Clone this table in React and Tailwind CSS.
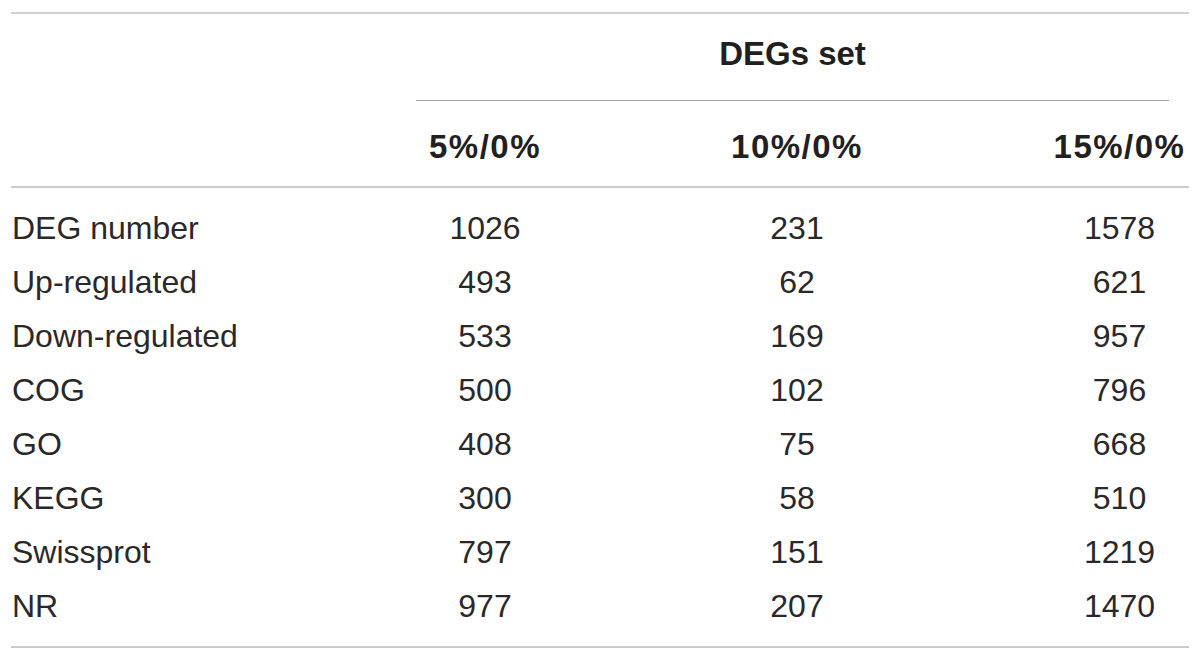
const rows = [
  ['DEG number', '1026', '231', '1578'],
  ['Up-regulated', '493', '62', '621'],
  ['Down-regulated', '533', '169', '957'],
  ['COG', '500', '102', '796'],
  ['GO', '408', '75', '668'],
  ['KEGG', '300', '58', '510'],
  ['Swissprot', '797', '151', '1219'],
  ['NR', '977', '207', '1470'],
]

const cols = 'grid grid-cols-[318px_312px_312px_233px]'

export default function App() {
  return (
    <div className="w-[1200px] h-[661px] bg-white px-[11px] pt-[12px] text-[#231f20] font-['Liberation_Sans',Arial,sans-serif]">
      <div className="border-t-2 border-[#d2d2d2]">
        <div className="flex h-[87px]">
          <div className="ml-[405px] w-[753px] border-b border-[#a3a3a3] flex items-center justify-center pb-[8px]">
            <span className="text-[33px] font-bold leading-none">DEGs set</span>
          </div>
        </div>
        <div className={`${cols} h-[85px] items-center text-[33px] font-bold leading-none tracking-[1.5px] pt-[6px]`}>
          <div />
          <div className="text-center">5%/0%</div>
          <div className="text-center">10%/0%</div>
          <div className="text-center pl-[100px]">15%/0%</div>
        </div>
      </div>
      <div className="border-t-2 border-[#cbcbcb] pt-[13px] pb-[13px] border-b-2">
        {rows.map((r) => (
          <div key={r[0]} className={`${cols} h-[54px] items-center text-[32px] leading-none text-[#2b2829]`}>
            <div className="pl-[1px]">{r[0]}</div>
            <div className="text-center">{r[1]}</div>
            <div className="text-center">{r[2]}</div>
            <div className="text-center pl-[100px]">{r[3]}</div>
          </div>
        ))}
      </div>
    </div>
  )
}
